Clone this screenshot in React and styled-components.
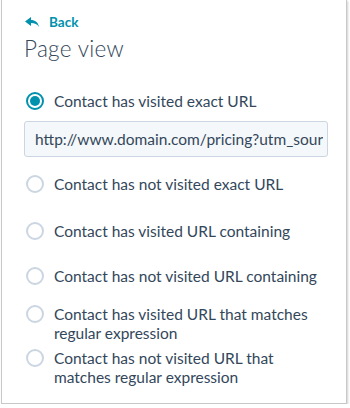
import React from "react";
import styled, { createGlobalStyle } from "styled-components";

const Global = createGlobalStyle`
  html, body { margin: 0; padding: 0; background: #fff; }
  body { font-family: Lato, "Open Sans", sans-serif; color: #33475b; }
`;

const Panel = styled.div`
  box-sizing: border-box;
  margin-left: 1px;
  width: 346px;
  height: 404px;
  border-left: 1px solid #c8c8c8;
  border-right: 1px solid #c8c8c8;
  border-bottom: 1px solid #c8c8c8;
  box-shadow: 1px 1px 2px rgba(0, 0, 0, 0.18);
  padding: 13px 0 0 22px;
`;

const BackLink = styled.a`
  display: flex;
  align-items: center;
  gap: 10px;
  color: #0091ae;
  font-size: 13.5px;
  font-weight: 700;
  height: 18px;
  text-decoration: none;
  padding-left: 1px;
`;

const Title = styled.h1`
  margin: 4px 0 0 0;
  font-size: 22.5px;
  font-weight: 300;
  letter-spacing: 0.3px;
  line-height: 28px;
  color: #33475b;
`;

const List = styled.div`
  display: flex;
  flex-direction: column;
  margin-top: 29px;
`;

const Option = styled.label`
  display: flex;
  align-items: flex-start;
  gap: 10px;
  margin-top: ${(p) => p.$mt}px;
  font-size: 15.5px;
  line-height: 19px;
  color: #33475b;
`;

const Label = styled.span`
  max-width: 268px;
`;

const Radio = styled.span`
  box-sizing: border-box;
  flex: none;
  width: 18px;
  height: 18px;
  margin-left: 2px;
  border-radius: 50%;
  border: 2px solid ${(p) => (p.$checked ? "#0091ae" : "#cbd6e2")};
  display: flex;
  align-items: center;
  justify-content: center;
  &::after {
    content: "";
    display: ${(p) => (p.$checked ? "block" : "none")};
    width: 10px;
    height: 10px;
    border-radius: 50%;
    background: #0091ae;
  }
`;

const UrlInput = styled.input`
  box-sizing: border-box;
  margin: 10px 0 0 0;
  width: 304px;
  height: 36px;
  background: #f5f8fa;
  border: 1px solid #cbd6e2;
  border-radius: 3px;
  padding: 0 4px 0 10px;
  font-family: Lato, "Open Sans", sans-serif;
  font-size: 15.5px;
  color: #33475b;
  outline: none;
`;

const BackArrow = () => (
  <svg width="14" height="11" viewBox="0 0 14 11">
    <path d="M0 4.5 L6 0 V3 C10 3 13 5 14 10 C12 7 10 6 6 6 V9 Z" fill="#0091ae" />
  </svg>
);

const options = [
  ["Contact has not visited exact URL", 18],
  ["Contact has visited URL containing", 28],
  ["Contact has not visited URL containing", 26],
  ["Contact has visited URL that matches regular expression", 19],
  ["Contact has not visited URL that matches regular expression", 6],
];

export default function App() {
  return (
    <>
      <Global />
      <Panel>
        <BackLink>
          <BackArrow />
          Back
        </BackLink>
        <Title>Page view</Title>
        <List>
          <Option $mt={0}>
            <Radio $checked />
            <Label>Contact has visited exact URL</Label>
          </Option>
          <UrlInput readOnly value="http://www.domain.com/pricing?utm_source=email" />
          {options.map(([t, mt]) => (
            <Option key={t} $mt={mt}>
              <Radio />
              <Label>{t}</Label>
            </Option>
          ))}
        </List>
      </Panel>
    </>
  );
}
